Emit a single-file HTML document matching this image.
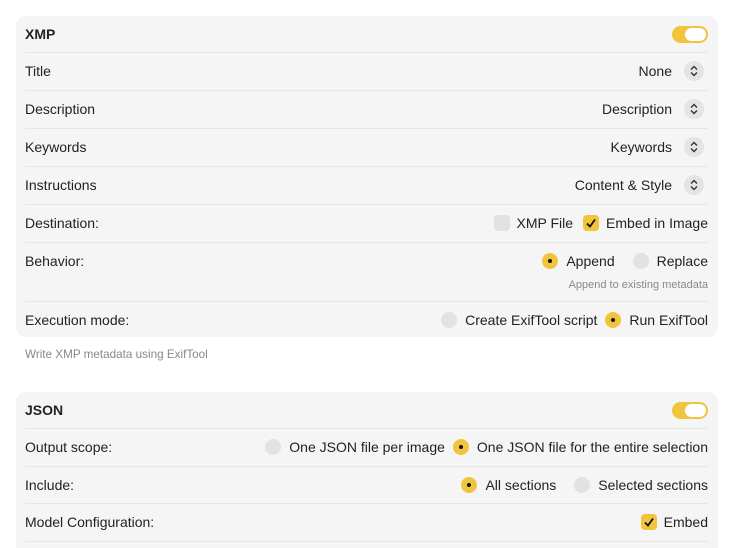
<!DOCTYPE html>
<html style="overflow:hidden;height:548px"><head><style>
body{margin:0;width:730px;height:548px;background:#fff;font-family:"Liberation Sans",sans-serif;color:#222;overflow:hidden;position:relative}
.card{position:absolute;left:16px;width:702px;background:#f5f5f5;border-radius:10px}
.row{position:absolute;left:9px;right:10px;display:flex;align-items:center;font-size:14px}
.sep{position:absolute;left:9px;right:10px;height:1px;background:#e6e6e6}
.r{margin-left:auto;display:flex;align-items:center}
.tog{width:36px;height:17px;border-radius:9px;background:#f0c43c;position:relative}
.tog:after{content:"";position:absolute;right:2px;top:2px;width:21px;height:13px;border-radius:7px;background:#fff}
.step{width:20px;height:20px;border-radius:50%;background:#e4e4e4;margin-left:12px;margin-right:4px;display:flex;align-items:center;justify-content:center}
.rad{width:16px;height:16px;border-radius:50%;background:#e2e2e2;margin-right:8px;margin-left:18px;display:inline-block;position:relative}
.rad.on{background:#f0c43c}
.rad.on:after{content:"";position:absolute;left:6px;top:6px;width:4px;height:4px;border-radius:50%;background:#111}
.cb{width:16px;height:16px;border-radius:4px;background:#e2e2e2;margin-right:7px;margin-left:10px;position:relative}
.cb.on{background:#f0c43c}
b{font-weight:bold}
.note{position:absolute;font-size:11px;color:#888}
</style></head><body>
<div class="card" style="top:16px;height:321px">
<div class="row" style="top:0;height:36px"><b>XMP</b><div class="r"><div class="tog"></div></div></div>
<div class="sep" style="top:36px"></div>
<div class="row" style="top:36px;height:38px">Title<div class="r">None<div class="step"><svg width="10" height="12" viewBox="0 0 10 12"><path d="M2 4.5L5 1.5 8 4.5M2 7.5L5 10.5 8 7.5" fill="none" stroke="#333" stroke-width="1.4"/></svg></div></div></div>
<div class="sep" style="top:74px"></div>
<div class="row" style="top:74px;height:38px">Description<div class="r">Description<div class="step"><svg width="10" height="12" viewBox="0 0 10 12"><path d="M2 4.5L5 1.5 8 4.5M2 7.5L5 10.5 8 7.5" fill="none" stroke="#333" stroke-width="1.4"/></svg></div></div></div>
<div class="sep" style="top:112px"></div>
<div class="row" style="top:112px;height:38px">Keywords<div class="r">Keywords<div class="step"><svg width="10" height="12" viewBox="0 0 10 12"><path d="M2 4.5L5 1.5 8 4.5M2 7.5L5 10.5 8 7.5" fill="none" stroke="#333" stroke-width="1.4"/></svg></div></div></div>
<div class="sep" style="top:150px"></div>
<div class="row" style="top:150px;height:38px">Instructions<div class="r">Content &amp; Style<div class="step"><svg width="10" height="12" viewBox="0 0 10 12"><path d="M2 4.5L5 1.5 8 4.5M2 7.5L5 10.5 8 7.5" fill="none" stroke="#333" stroke-width="1.4"/></svg></div></div></div>
<div class="sep" style="top:188px"></div>
<div class="row" style="top:188px;height:38px">Destination:<div class="r"><div class="cb"></div>XMP File<div class="cb on"><svg width="16" height="16" viewBox="0 0 16 16" style="position:absolute;left:0;top:0"><path d="M4 8.5L7 11.5 12 4.5" fill="none" stroke="#111" stroke-width="1.8"/></svg></div>Embed in Image</div></div>
<div class="sep" style="top:226px"></div>
<div class="row" style="top:226px;height:38px">Behavior:<div class="r"><span class="rad on"></span>Append<span class="rad"></span>Replace</div></div>
<div class="note" style="top:263px;right:10px">Append to existing metadata</div>
<div class="sep" style="top:285px"></div>
<div class="row" style="top:285px;height:38px">Execution mode:<div class="r"><span class="rad"></span>Create ExifTool script<span class="rad on" style="margin-left:8px"></span>Run ExifTool</div></div>
</div>
<div class="note" style="top:348px;left:25px;font-size:11.7px">Write XMP metadata using ExifTool</div>
<div class="card" style="top:392px;height:170px">
<div class="row" style="top:0;height:36px"><b>JSON</b><div class="r"><div class="tog"></div></div></div>
<div class="sep" style="top:36px"></div>
<div class="row" style="top:36px;height:38px">Output scope:<div class="r"><span class="rad"></span>One JSON file per image<span class="rad on" style="margin-left:8px"></span>One JSON file for the entire selection</div></div>
<div class="sep" style="top:74px"></div>
<div class="row" style="top:74px;height:37px">Include:<div class="r"><span class="rad on"></span>All sections<span class="rad"></span>Selected sections</div></div>
<div class="sep" style="top:111px"></div>
<div class="row" style="top:111px;height:38px">Model Configuration:<div class="r"><div class="cb on"><svg width="16" height="16" viewBox="0 0 16 16" style="position:absolute;left:0;top:0"><path d="M4 8.5L7 11.5 12 4.5" fill="none" stroke="#111" stroke-width="1.8"/></svg></div>Embed</div></div>
<div class="sep" style="top:149px"></div>
</div>
</body></html>
